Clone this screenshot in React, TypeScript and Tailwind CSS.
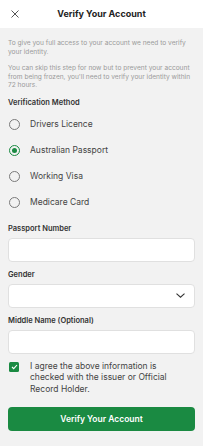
import React, { useState } from 'react';

const methods = ['Drivers Licence', 'Australian Passport', 'Working Visa', 'Medicare Card'];

export default function App() {
  const [method, setMethod] = useState('Australian Passport');
  const [agreed, setAgreed] = useState(true);

  return (
    <div className="min-h-[446px] w-[203px] bg-[#f2f2f2] font-['Inter',sans-serif] text-[#333]">
      {/* header */}
      <div className="relative flex h-[28px] items-center justify-center bg-white">
        <button className="absolute left-[11px] top-[10px] text-[#555]">
          <svg width="8" height="8" viewBox="0 0 8 8" fill="none" stroke="currentColor" strokeWidth="1">
            <path d="M0.5 0.5l7 7M7.5 0.5l-7 7" />
          </svg>
        </button>
        <h1 className="text-[9px] font-bold text-[#222]">Verify Your Account</h1>
      </div>

      <div className="px-[8px] pt-[11px]">
        <p className="text-[6.6px] leading-[8.5px] text-[#9a9a9a]">
          To give you full access to your account we need to verify your identity.
        </p>
        <p className="mt-[8px] text-[6.6px] leading-[8.5px] text-[#9a9a9a]">
          You can skip this step for now but to prevent your account from being frozen, you'll need to verify your identity within 72 hours.
        </p>

        <div className="mt-[8px] text-[7.5px] leading-[10px] font-semibold text-[#333]">Verification Method</div>
        <div className="mt-[11px] flex flex-col gap-[14px]">
          {methods.map((m) => {
            const on = m === method;
            return (
              <button key={m} onClick={() => setMethod(m)} className="flex h-[12px] items-center gap-[10px] pl-[1px]">
                <span
                  className={`flex h-[11px] w-[11px] items-center justify-center rounded-full border ${
                    on ? 'border-[#1a8a42]' : 'border-[#7a7a7a]'
                  }`}
                >
                  {on && <span className="h-[5px] w-[5px] rounded-full bg-[#1a8a42]" />}
                </span>
                <span className="text-[8.5px] text-[#444]">{m}</span>
              </button>
            );
          })}
        </div>

        <div className="mt-[15px] text-[7.5px] leading-[10px] font-semibold text-[#333]">Passport Number</div>
        <input className="mt-[4px] block h-[24px] w-full rounded-[4px] border border-[#e0e0e0] bg-white px-[6px] text-[8.5px] outline-none" />

        <div className="mt-[8px] text-[7.5px] leading-[10px] font-semibold text-[#333]">Gender</div>
        <div className="mt-[4px] flex h-[24px] w-full items-center justify-end rounded-[4px] border border-[#e0e0e0] bg-white pr-[9px]">
          <svg width="9" height="5" viewBox="0 0 9 5" fill="none" stroke="#333" strokeWidth="1.1">
            <path d="M0.5 0.7l4 3.5 4-3.5" />
          </svg>
        </div>

        <div className="mt-[8px] text-[7.5px] leading-[10px] font-semibold text-[#333]">Middle Name (Optional)</div>
        <input className="mt-[4px] block h-[24px] w-full rounded-[4px] border border-[#e0e0e0] bg-white px-[6px] text-[8.5px] outline-none" />

        <div className="mt-[7px] flex items-start gap-[11px] pr-[18px]">
          <button
            onClick={() => setAgreed(!agreed)}
            className={`mt-[1px] ml-[1px] flex h-[10px] w-[10px] shrink-0 items-center justify-center rounded-[1.5px] ${
              agreed ? 'bg-[#1a8a42]' : 'border border-[#777] bg-white'
            }`}
          >
            {agreed && (
              <svg width="7" height="6" viewBox="0 0 7 6" fill="none" stroke="white" strokeWidth="1.1">
                <path d="M1 3l1.7 1.7L6 1" />
              </svg>
            )}
          </button>
          <p className="text-[8.5px] leading-[11.5px] text-[#444]">
            I agree the above information is checked with the issuer or Official Record Holder.
          </p>
        </div>

        <button className="mt-[12px] flex h-[24px] w-full items-center justify-center rounded-[4px] bg-[#1a8a42] text-[8.5px] font-semibold text-white">
          Verify Your Account
        </button>
      </div>
    </div>
  );
}
